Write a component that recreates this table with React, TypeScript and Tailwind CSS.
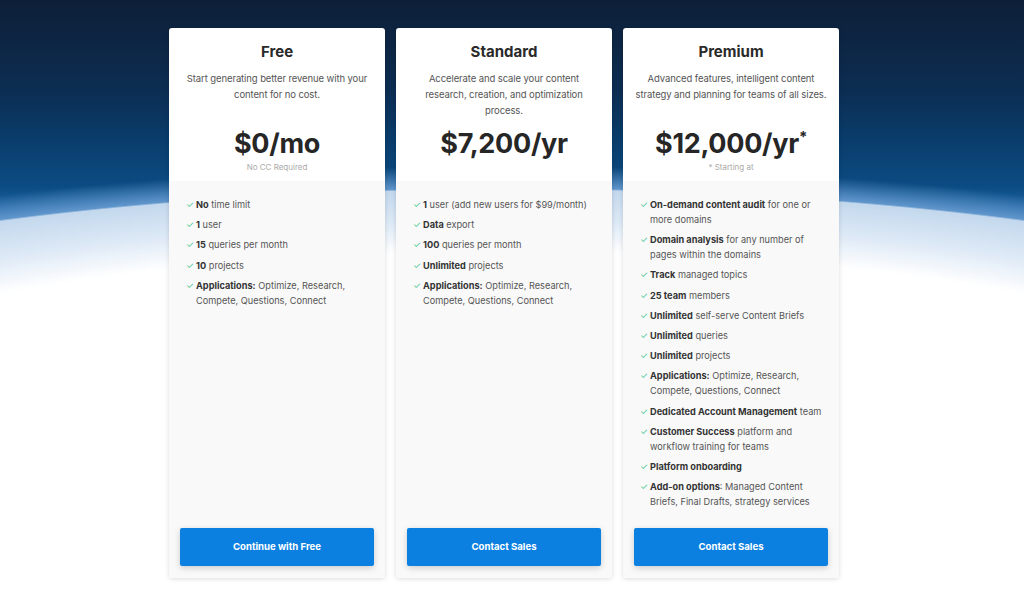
import type { ReactNode } from 'react'

interface Plan {
  name: string
  blurb: string
  blurbWidth: string
  price: ReactNode
  note: string
  features: ReactNode[]
  cta: string
}

const PLANS: Plan[] = [
  {
    name: 'Free',
    blurb: 'Start generating better revenue with your content for no cost.',
    blurbWidth: 'max-w-[192px]',
    price: '$0/mo',
    note: 'No CC Required',
    features: [
      <><b>No</b> time limit</>,
      <><b>1</b> user</>,
      <><b>15</b> queries per month</>,
      <><b>10</b> projects</>,
      <><b>Applications:</b> Optimize, Research, Compete, Questions, Connect</>,
    ],
    cta: 'Continue with Free',
  },
  {
    name: 'Standard',
    blurb: 'Accelerate and scale your content research, creation, and optimization process.',
    blurbWidth: 'max-w-[172px]',
    price: '$7,200/yr',
    note: '',
    features: [
      <><b>1</b> user (add new users for $99/month)</>,
      <><b>Data</b> export</>,
      <><b>100</b> queries per month</>,
      <><b>Unlimited</b> projects</>,
      <><b>Applications:</b> Optimize, Research, Compete, Questions, Connect</>,
    ],
    cta: 'Contact Sales',
  },
  {
    name: 'Premium',
    blurb: 'Advanced features, intelligent content strategy and planning for teams of all sizes.',
    blurbWidth: 'max-w-[200px]',
    price: (
      <>
        $12,000/yr<sup className="text-[15px] top-[-0.75em]">*</sup>
      </>
    ),
    note: '* Starting at',
    features: [
      <><b>On-demand content audit</b> for one or more domains</>,
      <><b>Domain analysis</b> for any number of pages within the domains</>,
      <><b>Track</b> managed topics</>,
      <><b>25 team</b> members</>,
      <><b>Unlimited</b> self-serve Content Briefs</>,
      <><b>Unlimited</b> queries</>,
      <><b>Unlimited</b> projects</>,
      <><b>Applications:</b> Optimize, Research, Compete, Questions, Connect</>,
      <><b>Dedicated Account Management</b> team</>,
      <><b>Customer Success</b> platform and workflow training for teams</>,
      <><b>Platform onboarding</b></>,
      <><b>Add-on options</b>: Managed Content Briefs, Final Drafts, strategy services</>,
    ],
    cta: 'Contact Sales',
  },
]

function PlanCard({ plan }: { plan: Plan }) {
  return (
    <div className="flex h-[550px] w-[216px] flex-col overflow-hidden rounded-[3px] bg-white shadow-[0_1px_5px_rgba(0,0,0,0.14)]">
      {/* Header */}
      <div className="flex flex-col items-center px-[8px] pt-[14px] text-center">
        <h2 className="text-[15px] leading-[20px] font-bold text-[#2a2a2a]">{plan.name}</h2>
        <p className={`mt-[9px] h-[48px] text-[9.5px] leading-[16px] tracking-[-0.1px] text-[#555] ${plan.blurbWidth}`}>
          {plan.blurb}
        </p>
        <div className="mt-[9px] text-[27px] leading-[32px] font-bold tracking-[-0.3px] text-[#262626]">
          {plan.price}
        </div>
        <div className="mt-[1px] h-[12px] text-[8px] leading-[12px] text-[#aaa]">{plan.note}</div>
      </div>

      {/* Features */}
      <div className="mt-[8px] flex flex-1 flex-col bg-[#f9f9f9] px-[11px] pt-[16px] pb-[12px]">
        <ul className="flex flex-col gap-[5.2px] pl-[6px] pr-[2px]">
          {plan.features.map((f, i) => (
            <li key={i} className="flex items-start gap-[3px] text-[9.2px] leading-[15px] text-[#555] [&_b]:font-bold [&_b]:text-[#333]">
              <span className="w-[7px] shrink-0 text-[9px] text-[#44c790]">✓</span>
              <span>{f}</span>
            </li>
          ))}
        </ul>
        <button className="mt-auto h-[38px] w-full rounded-[2px] bg-[#0b80e1] text-[9.6px] font-bold text-white shadow-[0_2px_6px_rgba(0,0,0,0.18)]">
          {plan.cta}
        </button>
      </div>
    </div>
  )
}

export default function App() {
  return (
    <div className="h-[613px] w-full bg-[radial-gradient(ellipse_1100px_275px_at_50%_463px,#ffffff_0%,#ffffff_77%,#dde9f6_88%,#c3d8ed_99.4%,#5f95cb_100%,rgba(60,120,190,0)_108%),linear-gradient(to_bottom,#0e1f38_0px,#0c2d52_90px,#0a3d6c_140px,#0b4b82_185px,#1d64a4_215px,#2c72b2_240px)] font-['Inter',sans-serif]">
      <div className="flex justify-center gap-[11px] pt-[28px] pr-[16px]">
        {PLANS.map((p) => (
          <PlanCard key={p.name} plan={p} />
        ))}
      </div>
    </div>
  )
}
